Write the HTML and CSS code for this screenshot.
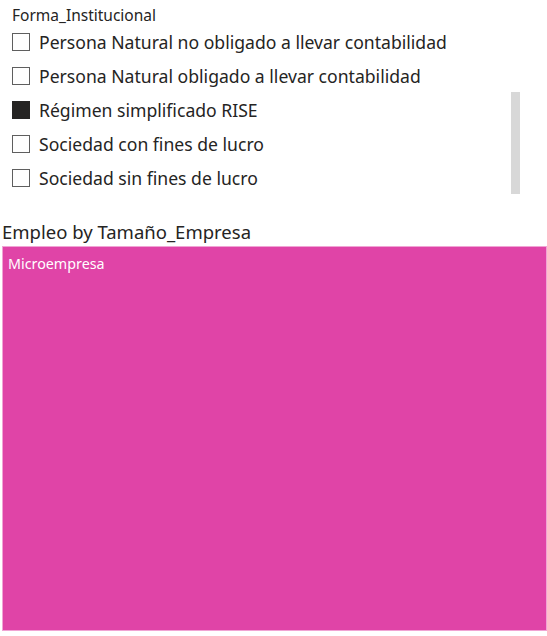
FILE: index.html
```html
<!DOCTYPE html>
<html lang="es">
<head>
<meta charset="utf-8">
<link rel="stylesheet" href="styles.css">
</head>
<body>
<div class="slicer">
  <div class="slicer-title">Forma_Institucional</div>
  <div class="slicer-body">
    <ul class="items">
      <li class="item"><span class="box"></span><span class="label">Persona Natural no obligado a llevar contabilidad</span></li>
      <li class="item"><span class="box"></span><span class="label">Persona Natural obligado a llevar contabilidad</span></li>
      <li class="item"><span class="box checked"></span><span class="label">Régimen simplificado RISE</span></li>
      <li class="item"><span class="box"></span><span class="label">Sociedad con fines de lucro</span></li>
      <li class="item"><span class="box"></span><span class="label">Sociedad sin fines de lucro</span></li>
    </ul>
    <div class="scrollbar"></div>
  </div>
</div>
<div class="chart">
  <div class="chart-title">Empleo by Tamaño_Empresa</div>
  <div class="treemap">
    <div class="tile"><span class="tile-label">Microempresa</span></div>
  </div>
</div>
</body>
</html>
```
FILE: styles.css
```css
html, body {
  margin: 0;
  padding: 0;
  background: #ffffff;
  width: 547px;
  height: 636px;
  overflow: hidden;
}
body {
  font-family: "Noto Sans", sans-serif;
  color: #252423;
}
.slicer {
  padding: 5px 0 0 12px;
  height: 203px;
  box-sizing: border-box;
}
.slicer-title {
  font-size: 15.5px;
  line-height: 20px;
  color: #252423;
}
.slicer-body {
  position: relative;
}
.items {
  list-style: none;
  margin: 0;
  padding: 0;
}
.item {
  display: flex;
  align-items: center;
  height: 34px;
}
.box {
  width: 18px;
  height: 18px;
  box-sizing: border-box;
  border: 1px solid #5f5f5f;
  background: #fff;
  flex: none;
}
.box.checked {
  background: #252423;
  border-color: #252423;
}
.label {
  margin-left: 9px;
  font-size: 17.6px;
  color: #252423;
  white-space: nowrap;
}
.scrollbar {
  position: absolute;
  left: 499px;
  top: 67px;
  width: 9px;
  height: 102px;
  background: #d8d8d8;
}
.chart {
  padding: 0 0 0 2px;
}
.chart-title {
  font-size: 18.5px;
  line-height: 24px;
  height: 26px;
  color: #252423;
  margin-top: 17px;
}
.treemap {
  height: 385px;
  box-sizing: border-box;
}
.tile {
  height: 100%;
  background: #e044a7;
  border: 1px solid #f0a4d4;
  box-sizing: border-box;
  padding: 5px 0 0 5px;
}
.tile-label {
  color: #ffffff;
  font-size: 14.3px;
}
```
